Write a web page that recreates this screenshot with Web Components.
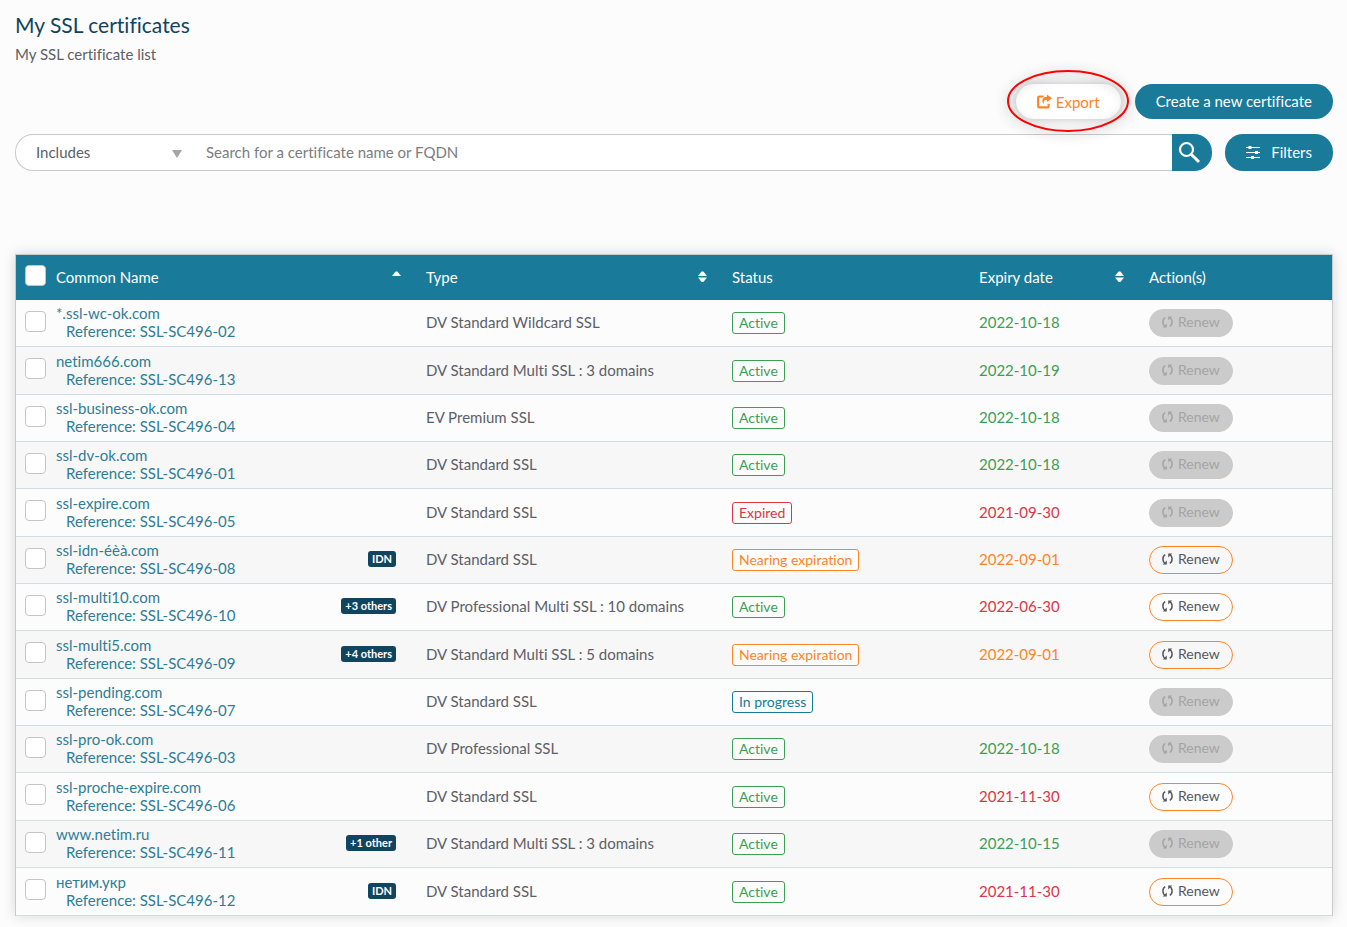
<!DOCTYPE html>
<html lang="en">
<head>
<meta charset="utf-8">
<title>My SSL certificates</title>
<style>
  html { background: #fcfcfc; }
  body {
    margin: 0;
    font: 15px/18px Lato, "Liberation Sans", sans-serif;
    font-variant-ligatures: none;
    color: #5c6067;
    --teal: #197a99;
    --navy: #10445f;
    --orange: #ff8426;
    --green: #3d9e56;
    --red: #dc3545;
    --line: #c8cacb;
  }
</style>
</head>
<body>
<certificates-page></certificates-page>

<template id="certificates-page">
  <style>
    :host { display: block; padding: 10px 14px 11px 15px; }
    .actions { display: flex; justify-content: flex-end; align-items: center; gap: 14px; margin: 20px 0 15px; }
    .tools { display: flex; align-items: center; gap: 13px; margin-bottom: 83px; }
    search-bar { flex: 1; }
  </style>
  <page-heading>
    <span slot="title">My SSL certificates</span>
    <span slot="subtitle">My SSL certificate list</span>
  </page-heading>
  <div class="actions">
    <highlight-ring><pill-button kind="light">
      <svg slot="icon" width="15" height="15" viewBox="0 0 16 15"><path d="M7 2.2H2.4Q1.200 2.2 1.200 3.4V12.600Q1.200 13.800 2.400 13.800H11.200Q12.400 13.800 12.400 12.600V10" fill="none" stroke="currentColor" stroke-width="2.300"/><path d="M10.600 0L16 4L10.600 8V5.600C7.800 5.600 6.800 7 7.200 10C5.200 8.400 4.200 2.600 10.600 2.400Z" fill="currentColor"/></svg>
      Export</pill-button></highlight-ring>
    <pill-button>Create a new certificate</pill-button>
  </div>
  <div class="tools">
    <search-bar></search-bar>
    <pill-button kind="tall">
      <svg slot="icon" width="14" height="14" viewBox="0 0 14 14" stroke="currentColor" stroke-width="1"><path d="M0 2.500H14M0 7.500H14M0 12.500H14"/><path d="M4 1V4M10.500 6V9M6.500 11V14" stroke-width="3"/></svg>
      Filters</pill-button>
  </div>
  <certificate-table></certificate-table>
</template>

<template id="page-heading">
  <style>
    :host { display: block; }
    h1 { margin: 0 0 4px; font-size: 21px; line-height: 30px; font-weight: 400; color: var(--navy); }
    p { margin: 0; line-height: 20px; }
  </style>
  <h1><slot name="title"></slot></h1>
  <p><slot name="subtitle"></slot></p>
</template>

<template id="highlight-ring">
  <style>
    :host { display: block; position: relative; }
    svg { position: absolute; left: 50%; top: 50%; transform: translate(-50%, -50%); pointer-events: none; overflow: visible; filter: drop-shadow(0 2px 6px rgba(0,0,0,.4)); }
  </style>
  <slot></slot>
  <svg width="124" height="64" viewBox="0 0 124 64"><ellipse cx="62" cy="31" rx="60" ry="30" fill="none" stroke="#f00" stroke-width="2"/></svg>
</template>

<template id="pill-button">
  <style>
    :host { display: block; }
    button {
      display: flex; align-items: center; justify-content: center; height: 35px; padding: 0 21px 2px;
      border: 0; border-radius: 18px; background: var(--teal); color: #fff; font: inherit; font-variant-ligatures: none; cursor: pointer; white-space: nowrap;
    }
    :host([kind="light"]) button { padding-bottom: 0; background: #fff; color: var(--orange); gap: 4px; box-shadow: 0 0 8px rgba(0,0,0,.25); }
    :host([kind="tall"]) button { height: 37px; gap: 11px; }
  </style>
  <button type="button"><slot name="icon"></slot><span><slot></slot></span></button>
</template>

<template id="search-bar">
  <style>
    :host { display: block; }
    form { display: flex; height: 37px; margin: 0; }
    .field {
      flex: 1; display: flex; box-sizing: border-box; background: #fff;
      border: 1px solid var(--line); border-right: 0; border-radius: 18px 0 0 18px; overflow: hidden;
    }
    .match { display: grid; width: 180px; align-items: center; }
    .match > * { grid-area: 1 / 1; }
    .match svg { justify-self: end; margin: 3px 14px 0 0; pointer-events: none; }
    select, input { border: 0; background: none; font: inherit; font-variant-ligatures: none; color: inherit; outline: 0; appearance: none; }
    select { width: 100%; height: 35px; padding: 0 20px 2px; }
    input { flex: 1; min-width: 0; padding: 0 10px 2px; }
    input::placeholder { color: #7a7d81; opacity: 1; }
    button { width: 40px; padding: 0 6px; border: 0; border-radius: 0 18px 18px 0; background: var(--teal); color: #fff; cursor: pointer; }
    button svg { display: block; }
  </style>
  <form role="search">
    <div class="field">
      <div class="match">
        <select aria-label="Match mode"><option>Includes</option><option>Starts with</option><option>Ends with</option></select>
        <svg width="10" height="8" viewBox="0 0 10 8"><path d="M0 0H10L5 8Z" fill="#a3a5a7"/></svg>
      </div>
      <input type="text" aria-label="Search" placeholder="Search for a certificate name or FQDN">
    </div>
    <button type="button" aria-label="Search"><svg width="23" height="23" viewBox="0 0 23 23" fill="none" stroke="currentColor"><circle cx="8.500" cy="8.500" r="6.500" stroke-width="2.200"/><path d="M13.200 13.200L21 21" stroke-width="3"/></svg></button>
  </form>
</template>

<template id="check-box">
  <style>
    :host { display: block; }
    input { display: block; appearance: none; box-sizing: border-box; width: 21px; height: 21px; margin: 0; border: 1px solid #c3c6c8; border-radius: 4px; background: #fff; }
  </style>
  <input type="checkbox">
</template>

<template id="count-badge">
  <style>
    :host { display: block; padding: 0 4px; border-radius: 3px; background: var(--navy); color: #fff; font-size: 11px; line-height: 16px; font-weight: 700; white-space: nowrap; }
  </style>
  <slot></slot>
</template>

<template id="status-tag">
  <style>
    :host { display: inline-block; vertical-align: middle; padding: 0 6px; border: 1px solid; border-radius: 3px; background: #fcfcfc; font-size: 14px; line-height: 20px; color: var(--green); white-space: nowrap; }
    :host([tone="red"]) { color: var(--red); }
    :host([tone="orange"]) { color: var(--orange); }
    :host([tone="teal"]) { color: var(--teal); }
  </style>
  <slot></slot>
</template>

<template id="renew-button">
  <style>
    :host { display: block; }
    button { display: flex; align-items: center; gap: 5px; height: 28px; padding: 0 12px 2px; border: 1px solid var(--orange); border-radius: 14px; background: none; color: #54585f; font: inherit; font-size: 14px; line-height: 18px; cursor: pointer; }
    button:disabled { border-color: #cbcbcb; background: #cbcbcb; color: #a4a4a4; cursor: default; }
  </style>
  <button type="button">
    <svg width="11" height="12" viewBox="0 0 11 12"><path d="M3.600 10.600C.2 9 0 3.400 3.200 1.600M7.400 1.400C10.800 3 11 8.600 7.800 10.400" fill="none" stroke="currentColor" stroke-width="1.500"/><path d="M.8 11.600H4.800V7.600ZM10.200 .4H6.200V4.400Z" fill="currentColor"/></svg>
    <span>Renew</span>
  </button>
</template>

<template id="sort-header">
  <style>
    :host { display: block; }
    button { display: flex; width: 100%; align-items: center; justify-content: space-between; padding: 0; border: 0; background: none; color: inherit; font: inherit; cursor: pointer; }
    svg { display: block; fill: currentColor; }
    .down { visibility: hidden; }
    :host([order="none"]) .down { visibility: visible; }
  </style>
  <button type="button"><slot></slot>
    <svg width="9" height="11" viewBox="0 0 9 11"><path d="M0 5L3.600 .5H5.400L9 5Z"/><path class="down" d="M0 6.500L3.600 11H5.400L9 6.500Z"/></svg>
  </button>
</template>

<template id="certificate-table">
  <style>
    :host { display: block; }
    table { width: 100%; table-layout: fixed; border-collapse: separate; border-spacing: 0; border: 1px solid var(--line); border-bottom: 0; box-shadow: 0 0 12px rgba(0,0,0,.15); }
    th, td { box-sizing: border-box; padding: 0 0 2px; }
    th { height: 45px; background: var(--teal); color: #fff; font-weight: 400; text-align: left; }
    td { height: 47px; border-bottom: 1px solid #cfdedf; background: #fcfcfc; }
    tbody tr:nth-child(even) td { background: #f7f7f7; }
    tbody tr:nth-child(3n+2) td, tbody tr:last-child td { height: 48px; }
    th:nth-child(n+3), td:nth-child(n+3) { padding-left: 10px; }
    th:first-child, td:first-child { padding-bottom: 4px; }
    td.control { padding-bottom: 0; }
    check-box { margin-left: 9px; }
    .c-check { width: 40px; } .c-name { width: 360px; } .c-type { width: 306px; }
    .c-status { width: 247px; } .c-date { width: 170px; } .c-action { width: 193px; }
    .name { display: flex; align-items: center; justify-content: space-between; padding-right: 20px; }
    a { display: block; color: #2f7d96; text-decoration: none; }
    .ref { display: block; padding-left: 10px; }
    th sort-header { margin-right: 15px; }
    .green { color: var(--green); } .red { color: var(--red); } .orange { color: var(--orange); }
  </style>
  <table>
    <colgroup><col class="c-check"><col class="c-name"><col class="c-type"><col class="c-status"><col class="c-date"><col class="c-action"></colgroup>
    <thead><tr>
      <th scope="col"><check-box label="Select all"></check-box></th>
      <th scope="col"><sort-header order="asc">Common Name</sort-header></th>
      <th scope="col"><sort-header order="none">Type</sort-header></th>
      <th scope="col">Status</th>
      <th scope="col"><sort-header order="none">Expiry date</sort-header></th>
      <th scope="col">Action(s)</th>
    </tr></thead>
    <tbody></tbody>
  </table>
</template>

<script>
  class TemplateElement extends HTMLElement {
    constructor() {
      super();
      this.attachShadow({ mode: 'open' }).append(
        document.getElementById(this.localName).content.cloneNode(true));
    }
  }

  const define = (name, base = class extends TemplateElement {}) => customElements.define(name, base);

  define('page-heading');
  define('highlight-ring');
  define('pill-button');
  define('search-bar');
  define('count-badge');
  define('status-tag');
  define('sort-header');

  define('check-box', class extends TemplateElement {
    connectedCallback() {
      this.shadowRoot.querySelector('input').setAttribute('aria-label', this.getAttribute('label') || '');
    }
  });

  define('renew-button', class extends TemplateElement {
    connectedCallback() {
      this.shadowRoot.querySelector('button').disabled = this.hasAttribute('disabled');
    }
  });

  // name, reference number, badge, type, status, date, date tone, can be renewed
  const certificates = [
    ['*.ssl-wc-ok.com', '02', '', 'DV Standard Wildcard SSL', 'Active', '2022-10-18', 'green', false],
    ['netim666.com', '13', '', 'DV Standard Multi SSL : 3 domains', 'Active', '2022-10-19', 'green', false],
    ['ssl-business-ok.com', '04', '', 'EV Premium SSL', 'Active', '2022-10-18', 'green', false],
    ['ssl-dv-ok.com', '01', '', 'DV Standard SSL', 'Active', '2022-10-18', 'green', false],
    ['ssl-expire.com', '05', '', 'DV Standard SSL', 'Expired', '2021-09-30', 'red', false],
    ['ssl-idn-éèà.com', '08', 'IDN', 'DV Standard SSL', 'Nearing expiration', '2022-09-01', 'orange', true],
    ['ssl-multi10.com', '10', '+3 others', 'DV Professional Multi SSL : 10 domains', 'Active', '2022-06-30', 'red', true],
    ['ssl-multi5.com', '09', '+4 others', 'DV Standard Multi SSL : 5 domains', 'Nearing expiration', '2022-09-01', 'orange', true],
    ['ssl-pending.com', '07', '', 'DV Standard SSL', 'In progress', '', '', false],
    ['ssl-pro-ok.com', '03', '', 'DV Professional SSL', 'Active', '2022-10-18', 'green', false],
    ['ssl-proche-expire.com', '06', '', 'DV Standard SSL', 'Active', '2021-11-30', 'red', true],
    ['www.netim.ru', '11', '+1 other', 'DV Standard Multi SSL : 3 domains', 'Active', '2022-10-15', 'green', false],
    ['нетим.укр', '12', 'IDN', 'DV Standard SSL', 'Active', '2021-11-30', 'red', true]
  ];
  const tones = { 'Active': 'green', 'Expired': 'red', 'Nearing expiration': 'orange', 'In progress': 'teal' };

  define('certificate-table', class extends TemplateElement {
    connectedCallback() {
      this.shadowRoot.querySelector('tbody').innerHTML = certificates.map(
        ([name, ref, badge, type, status, date, tone, renewable]) => `<tr>
          <td><check-box label="Select ${name}"></check-box></td>
          <td><div class="name"><a href="#${ref}">${name}<span class="ref">Reference: SSL-SC496-${ref}</span></a>${badge ? `<count-badge>${badge}</count-badge>` : ''}</div></td>
          <td>${type}</td>
          <td class="control"><status-tag tone="${tones[status]}">${status}</status-tag></td>
          <td class="${tone}">${date}</td>
          <td class="control"><renew-button ${renewable ? '' : 'disabled'}></renew-button></td>
        </tr>`).join('');
    }
  });

  define('certificates-page');
</script>
</body>
</html>
